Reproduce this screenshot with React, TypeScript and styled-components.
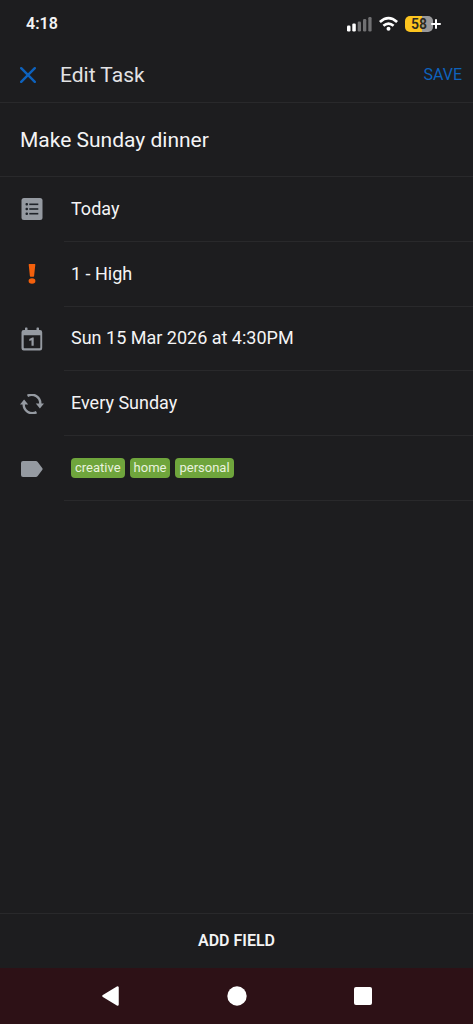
import React, { useState } from "react";
import styled, { createGlobalStyle } from "styled-components";

const color = {
  bg: "#1d1d1f",
  line: "#29292b",
  text: "#f4f4f5",
  blue: "#0e62bd",
  icon: "#959aa1",
  orange: "#f4600c",
  green: "#6fa53c",
  nav: "#2d1116",
};

const GlobalStyle = createGlobalStyle`
  *, *::before, *::after { box-sizing: border-box; }
  body {
    margin: 0;
    background: ${color.bg};
    color: ${color.text};
    font-family: Roboto, "Liberation Sans", sans-serif;
  }
  button, input { font: inherit; color: inherit; }
`;

const Screen = styled.div`
  display: flex;
  flex-direction: column;
  min-height: 100vh;
`;

const StatusBar = styled.div`
  display: flex;
  align-items: center;
  justify-content: space-between;
  height: 48px;
  padding: 0 32px 0 26px;
`;

const Clock = styled.time`
  font-size: 16px;
  line-height: 20px;
  font-weight: 600;
`;

const StatusIcons = styled.div`
  display: flex;
  align-items: center;
  gap: 7px;
`;

const Glyph = styled.svg`
  display: block;
  flex: none;
`;

const Battery = styled.div`
  display: flex;
  align-items: center;
`;

const BatteryLevel = styled.span`
  width: 28px;
  height: 16px;
  border-radius: 5px;
  background: linear-gradient(to right, #fdc51f 60%, #98989a 60%);
  color: #2b2a22;
  font-size: 14px;
  line-height: 16px;
  font-weight: 600;
  text-align: center;
`;

const Charging = styled(Glyph)`
  margin-left: -2px;
`;

const Header = styled.header`
  display: flex;
  align-items: center;
  height: 55px;
  padding: 0 11px 0 16px;
  border-bottom: 1px solid ${color.line};
`;

const PlainButton = styled.button`
  display: flex;
  align-items: center;
  justify-content: center;
  padding: 0;
  border: 0;
  background: none;
  cursor: pointer;
`;

const CloseButton = styled(PlainButton)`
  width: 24px;
  height: 24px;
`;

const Heading = styled.h1`
  flex: 1;
  margin: 0 0 0 20px;
  font-size: 21px;
  line-height: 24px;
  font-weight: 400;
  color: #e2e2e4;
`;

const SaveButton = styled(PlainButton)`
  font-size: 16px;
  line-height: 24px;
  color: ${color.blue};
`;

const Form = styled.main`
  flex: 1;
`;

const TitleInput = styled.input`
  display: block;
  width: 100%;
  height: 74px;
  padding: 0 20px;
  border: 0;
  border-bottom: 1px solid ${color.line};
  border-radius: 0;
  outline: 0;
  background: none;
  font-size: 21px;
  line-height: 24px;
`;

const FieldList = styled.ul`
  display: grid;
  grid-auto-rows: 1fr;
  min-height: 324px;
  margin: 0;
  padding: 0;
  list-style: none;
`;

const Field = styled.li`
  display: flex;
`;

const FieldButton = styled(PlainButton)`
  flex: 1;
  align-items: stretch;
  justify-content: flex-start;
  text-align: left;
`;

const FieldIcon = styled.span`
  display: flex;
  align-items: center;
  justify-content: center;
  width: 64px;
`;

const FieldValue = styled.span`
  display: flex;
  flex: 1;
  align-items: center;
  gap: 5px;
  padding-left: 7px;
  border-bottom: 1px solid ${color.line};
  font-size: 18px;
  line-height: 24px;
`;

const Tag = styled.span`
  padding: 0 4px;
  border-radius: 4px;
  background: ${color.green};
  color: #e9f2df;
  font-size: 13px;
  line-height: 20px;
`;

const AddFieldButton = styled(PlainButton)`
  height: 55px;
  border-top: 1px solid ${color.line};
  font-size: 16px;
  line-height: 20px;
  font-weight: 600;
`;

const NavBar = styled.nav`
  display: flex;
  align-items: center;
  justify-content: center;
  gap: 78px;
  height: 56px;
  background: ${color.nav};
`;

const NavButton = styled(PlainButton)`
  width: 48px;
  height: 48px;
`;

const ListIcon = () => (
  <Glyph width="22" height="24" viewBox="0 0 22 24" aria-hidden="true">
    <rect x="0.5" y="1" width="21" height="22" rx="2.5" fill={color.icon} />
    <g fill="#1f2329">
      <rect x="4.5" y="6" width="2.5" height="2.5" rx="1" />
      <rect x="4.5" y="10.7" width="2.5" height="2.5" rx="1" />
      <rect x="4.5" y="15.4" width="2.5" height="2.5" rx="1" />
      <rect x="8.3" y="6.5" width="9" height="1.6" />
      <rect x="8.3" y="11.2" width="9" height="1.6" />
      <rect x="8.3" y="15.9" width="9" height="1.6" />
    </g>
  </Glyph>
);

const PriorityIcon = () => (
  <Glyph width="10" height="22" viewBox="0 0 10 22" aria-hidden="true">
    <path d="M2.2 1h5.6q.6 0 .5.7L7.1 13q-.1.7-.7.7H3.6q-.6 0-.7-.7L1.7 1.700Q1.600 1 2.200 1z" fill={color.orange} />
    <ellipse cx="5" cy="18" rx="3.400" ry="2.800" fill={color.orange} />
  </Glyph>
);

const CalendarIcon = () => (
  <Glyph width="22" height="24" viewBox="0 0 22 24" aria-hidden="true">
    <path
      fillRule="evenodd"
      fill={color.icon}
      d="M4 1.300q0-.7.7-.7h1.100q.7 0 .7.700V3h9V1.300q0-.7.7-.7h1.100q.7 0 .7.700V3h1q2.200 0 2.200 2.200v16q0 2.200-2.200 2.200H2.700Q.5 23.400.5 21.200v-16Q.5 3 2.700 3H4zM2.700 8.200v12.300q0 .7.700.7h15.200q.7 0 .7-.7v-12.300z"
    />
    <path d="M8.300 12.100l3-1.500h1.400v8.200h-2.200v-5.500l-2.200.7z" fill={color.icon} />
  </Glyph>
);

const RepeatIcon = () => (
  <Glyph width="24" height="20" viewBox="0 0 24 20" aria-hidden="true">
    <g fill="none" stroke={color.icon} strokeWidth="2.400">
      <path d="M7.500 1.900A8.600 8.600 0 0 1 20.200 10.500" />
      <path d="M16.500 18.100A8.600 8.600 0 0 1 3.800 9.500" />
    </g>
    <path d="M15.800 9.600H24l-4.100 4.900zM0 10.400h8.200L4.100 5.500z" fill={color.icon} />
  </Glyph>
);

const TagIcon = () => (
  <Glyph width="22" height="18" viewBox="0 0 22 18" aria-hidden="true">
    <path d="M2 1h12.800q1.200 0 1.900 1l4.700 6.200q.5.800 0 1.600L16.700 16q-.7 1-1.900 1H2q-2 0-2-2V3q0-2 2-2z" fill={color.icon} />
  </Glyph>
);

const tags = ["creative", "home", "personal"];

const fields = [
  { label: "List", icon: <ListIcon />, value: "Today" },
  { label: "Priority", icon: <PriorityIcon />, value: "1 - High" },
  { label: "Due date", icon: <CalendarIcon />, value: "Sun 15 Mar 2026 at 4:30PM" },
  { label: "Repeat", icon: <RepeatIcon />, value: "Every Sunday" },
  { label: "Tags", icon: <TagIcon />, value: tags.map((tag) => <Tag key={tag}>{tag}</Tag>) },
];

export default function App() {
  const [title, setTitle] = useState("Make Sunday dinner");

  return (
    <Screen>
      <GlobalStyle />
      <StatusBar>
        <Clock>4:18</Clock>
        <StatusIcons>
          <Glyph width="26" height="16" viewBox="0 0 26 16" aria-label="Signal">
            <g fill="#ffffff">
              <rect x="1" y="9.500" width="3.500" height="6" rx="1.200" />
              <rect x="6.300" y="7.500" width="3.500" height="8" rx="1.200" />
            </g>
            <g fill="#717173">
              <rect x="11.700" y="5.500" width="3.300" height="10" rx="1.200" />
              <rect x="17" y="3" width="3.300" height="12.500" rx="1.200" />
              <rect x="22.300" y="1" width="3.300" height="14.500" rx="1.200" />
            </g>
          </Glyph>
          <Glyph width="19" height="16" viewBox="0 0 19 16" aria-label="Wi-Fi">
            <g fill="none" stroke="#ffffff" strokeWidth="2.700">
              <path d="M.9 6Q9.500-1.700 18.100 6" />
              <path d="M4.400 9.700q5.100-4.300 10.200 0" />
            </g>
            <circle cx="9.500" cy="12.800" r="2" fill="#ffffff" />
          </Glyph>
          <Battery>
            <BatteryLevel>58</BatteryLevel>
            <Charging width="10" height="10" viewBox="0 0 10 10" aria-label="Charging">
              <path d="M5 1v8M1 5h8" stroke="#ffffff" strokeWidth="2" strokeLinecap="round" />
            </Charging>
          </Battery>
        </StatusIcons>
      </StatusBar>

      <Header>
        <CloseButton type="button" aria-label="Close">
          <Glyph width="16" height="16" viewBox="0 0 16 16" aria-hidden="true">
            <path d="M1.200 1.200l13.600 13.600M14.800 1.200L1.200 14.800" stroke={color.blue} strokeWidth="2.400" strokeLinecap="round" />
          </Glyph>
        </CloseButton>
        <Heading>Edit Task</Heading>
        <SaveButton type="button">SAVE</SaveButton>
      </Header>

      <Form>
        <TitleInput aria-label="Task title" value={title} onChange={(e) => setTitle(e.target.value)} />
        <FieldList>
          {fields.map((field) => (
            <Field key={field.label}>
              <FieldButton type="button" title={field.label}>
                <FieldIcon>{field.icon}</FieldIcon>
                <FieldValue>{field.value}</FieldValue>
              </FieldButton>
            </Field>
          ))}
        </FieldList>
      </Form>

      <AddFieldButton type="button">ADD FIELD</AddFieldButton>

      <NavBar>
        <NavButton type="button" aria-label="Back">
          <Glyph width="20" height="20" viewBox="0 0 20 20" aria-hidden="true">
            <path d="M16.500 1.500v17L2.500 10z" fill="#ffffff" stroke="#ffffff" strokeWidth="2.500" strokeLinejoin="round" />
          </Glyph>
        </NavButton>
        <NavButton type="button" aria-label="Home">
          <Glyph width="20" height="20" viewBox="0 0 20 20" aria-hidden="true">
            <circle cx="10" cy="10" r="9.700" fill="#ffffff" />
          </Glyph>
        </NavButton>
        <NavButton type="button" aria-label="Recent apps">
          <Glyph width="18" height="18" viewBox="0 0 18 18" aria-hidden="true">
            <rect width="18" height="18" rx="2" fill="#ffffff" />
          </Glyph>
        </NavButton>
      </NavBar>
    </Screen>
  );
}
